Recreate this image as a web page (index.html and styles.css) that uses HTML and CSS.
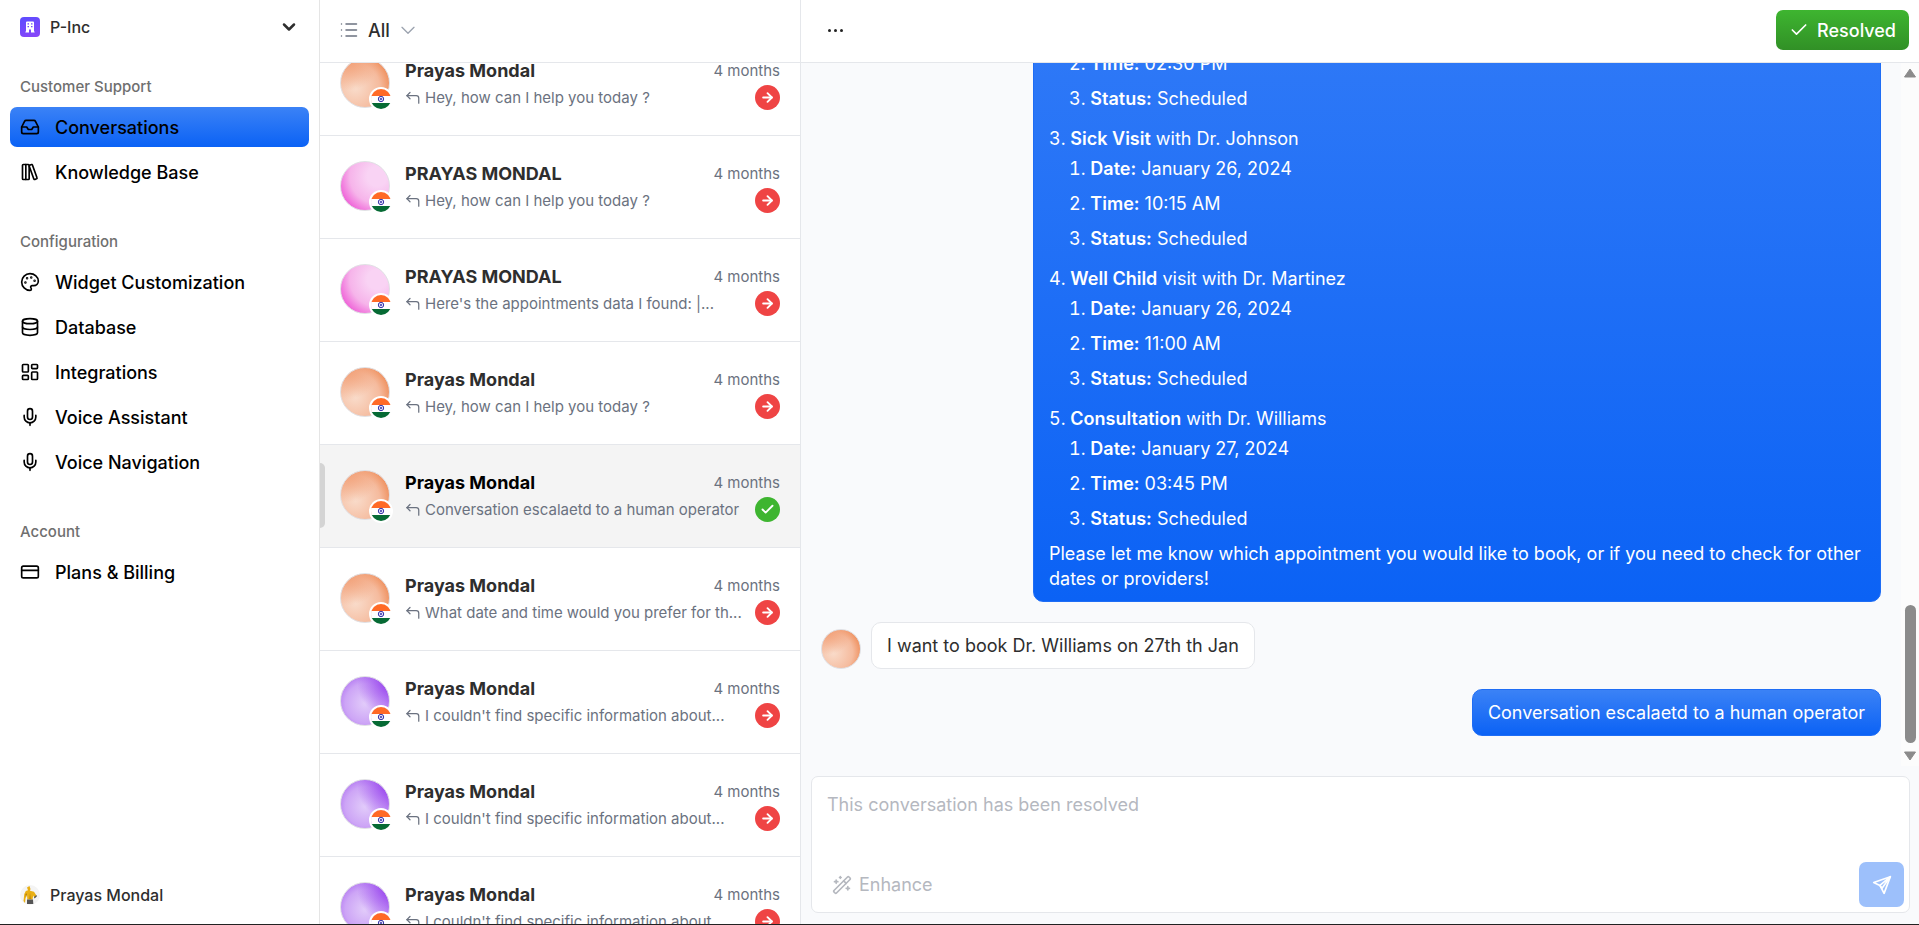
FILE: index.html
```
<!DOCTYPE html>
<html lang="en">
<head>
    <meta charset="UTF-8">
    <meta name="viewport" content="width=device-width, initial-scale=1.0">
    <title>Conversations | P-Inc</title>
    <link rel="stylesheet" href="styles.css">
</head>
<body>
    <!-- Icon sprite -->
    <svg class="sprite" aria-hidden="true">
        <symbol id="i-inbox" viewBox="0 0 24 24"><path d="M22 12h-6l-2 3h-4l-2-3H2"/><path d="M5.45 5.11 2 12v6a2 2 0 0 0 2 2h16a2 2 0 0 0 2-2v-6l-3.45-6.89A2 2 0 0 0 16.76 4H7.24a2 2 0 0 0-1.79 1.11z"/></symbol>
        <symbol id="i-library" viewBox="0 0 24 24"><rect width="8" height="18" x="3" y="3" rx="1"/><path d="M7 3v18"/><path d="M20.4 18.9c.2.5-.1 1.1-.6 1.3l-1.9.7c-.5.2-1.1-.1-1.3-.6L11.1 5.1c-.2-.5.1-1.1.6-1.3l1.9-.7c.5-.2 1.1.1 1.3.6Z"/></symbol>
        <symbol id="i-palette" viewBox="0 0 24 24"><circle cx="13.5" cy="6.5" r=".5" fill="currentColor"/><circle cx="17.5" cy="10.5" r=".5" fill="currentColor"/><circle cx="8.5" cy="7.5" r=".5" fill="currentColor"/><circle cx="6.5" cy="12.5" r=".5" fill="currentColor"/><path d="M12 2C6.5 2 2 6.5 2 12s4.5 10 10 10c.926 0 1.648-.746 1.648-1.688 0-.437-.18-.835-.437-1.125-.29-.289-.438-.652-.438-1.125a1.64 1.64 0 0 1 1.668-1.668h1.996c3.051 0 5.555-2.503 5.555-5.554C21.965 6.012 17.461 2 12 2z"/></symbol>
        <symbol id="i-database" viewBox="0 0 24 24"><ellipse cx="12" cy="5" rx="9" ry="3"/><path d="M3 5v14a9 3 0 0 0 18 0V5"/><path d="M3 12a9 3 0 0 0 18 0"/></symbol>
        <symbol id="i-dashboard" viewBox="0 0 24 24"><rect width="7" height="9" x="3" y="3" rx="1"/><rect width="7" height="5" x="14" y="3" rx="1"/><rect width="7" height="9" x="14" y="12" rx="1"/><rect width="7" height="5" x="3" y="16" rx="1"/></symbol>
        <symbol id="i-mic" viewBox="0 0 24 24"><path d="M12 2a3 3 0 0 0-3 3v7a3 3 0 0 0 6 0V5a3 3 0 0 0-3-3Z"/><path d="M19 10v2a7 7 0 0 1-14 0v-2"/><path d="M12 19v3"/></symbol>
        <symbol id="i-card" viewBox="0 0 24 24"><rect width="20" height="14" x="2" y="5" rx="2"/><path d="M2 10h20"/></symbol>
        <symbol id="i-chevron" viewBox="0 0 24 24"><path d="m6 9 6 6 6-6"/></symbol>
        <symbol id="i-chevron-wide" viewBox="0 0 24 24"><path d="m3 8 9 9 9-9"/></symbol>
        <symbol id="i-list" viewBox="0 0 24 24"><path d="M2 4h.01M2 12h.01M2 20h.01M8 4h14M8 12h14M8 20h14"/></symbol>
        <symbol id="i-check" viewBox="0 0 24 24"><path d="M20 6 9 17l-5-5"/></symbol>
        <symbol id="i-arrow" viewBox="0 0 24 24"><path d="M5 12h14"/><path d="m12 5 7 7-7 7"/></symbol>
        <symbol id="i-reply" viewBox="0 0 24 24"><path d="M22 21v-8a4 4 0 0 0-4-4H3"/><path d="M8 14 3 9l5-5"/></symbol>
        <symbol id="i-wand" viewBox="0 0 24 24"><path d="m21.64 3.64-1.28-1.28a1.21 1.21 0 0 0-1.72 0L2.36 18.64a1.21 1.21 0 0 0 0 1.72l1.28 1.28a1.2 1.2 0 0 0 1.72 0L21.64 5.36a1.2 1.2 0 0 0 0-1.72"/><path d="m14 7 3 3M5 6v4M19 14v4M10 2v2M7 8H3M21 16h-4M11 3H9"/></symbol>
        <symbol id="i-send" viewBox="0 0 24 24"><path d="M22 2 2 9l7.500 3.500L14.500 22z"/><path d="M22 2 9.500 12.500l2.500 3.500z"/></symbol>
        <symbol id="i-flag" viewBox="0 0 20 20"><path fill="#fff" stroke="none" d="M0 0h20v20H0z"/><path fill="#ff6a26" stroke="none" d="M0 0h20v7H0z"/><path fill="#066a34" stroke="none" d="M0 14h20v6H0z"/><circle cx="10" cy="10" r="2.7" fill="#dcdcf5" stroke="#3a36a8" stroke-width="1"/><circle cx="10" cy="10" r="1" fill="#3a36a8" stroke="none"/></symbol>
    </svg>

    <div class="app">
        <aside class="sidebar">
            <button class="org">
                <span class="org-logo">
                    <svg viewBox="0 0 20 20"><path fill="#fff" fill-rule="evenodd" d="M6 5.500a1 1 0 0 1 1-1h6a1 1 0 0 1 1 1v9h.6v1H11v-2.300a1 1 0 0 0-2 0v2.300H5.400v-1H6zM7.500 6.200v1.300H9V6.200zm3.500 0v1.300h1.500V6.200zM7.500 9v1.300H9V9zM11 9v1.300h1.500V9z"/></svg>
                </span>
                <span>P-Inc</span>
                <svg class="icon chevron"><use href="#i-chevron"/></svg>
            </button>

            <nav>
                <section>
                    <h2>Customer Support</h2>
                    <a class="active" href="#conversations"><svg class="icon"><use href="#i-inbox"/></svg>Conversations</a>
                    <a href="#knowledge"><svg class="icon"><use href="#i-library"/></svg>Knowledge Base</a>
                </section>
                <section>
                    <h2>Configuration</h2>
                    <a href="#widget"><svg class="icon"><use href="#i-palette"/></svg>Widget Customization</a>
                    <a href="#database"><svg class="icon"><use href="#i-database"/></svg>Database</a>
                    <a href="#integrations"><svg class="icon"><use href="#i-dashboard"/></svg>Integrations</a>
                    <a href="#assistant"><svg class="icon"><use href="#i-mic"/></svg>Voice Assistant</a>
                    <a href="#navigation"><svg class="icon"><use href="#i-mic"/></svg>Voice Navigation</a>
                </section>
                <section>
                    <h2>Account</h2>
                    <a href="#billing"><svg class="icon"><use href="#i-card"/></svg>Plans &amp; Billing</a>
                </section>
            </nav>

            <button class="user">
                <svg class="user-photo" viewBox="0 0 20 20"><circle cx="10" cy="10" r="10" fill="#f4f4f4"/><path fill="#e9af12" d="M7 2.500 9.500 1l1 3-.5 1.700 4 1 2.500 4-2 2.300-1.300-2.500-.7 4H7.300L7 9l-1.500 4.500L5 18l-1.500-2L4.300 9l1.500-3L8 5.300z"/><path fill="#a87408" d="m10 8 .6 6H9.500zM5.500 9l1.500-.5-1 4z"/><path fill="#555" d="M7 14.500h6l.3 4.500H7zM14 12l2.500-2 .3 1.500-2.300 2z"/></svg>
                <span>Prayas Mondal</span>
            </button>
        </aside>

        <section class="inbox">
            <header class="bar">
                <button class="filter">
                    <svg class="icon"><use href="#i-list"/></svg>
                    <span>All</span>
                    <svg class="icon filter-chevron"><use href="#i-chevron-wide"/></svg>
                </button>
            </header>
            <div class="threads" id="threads"></div>
        </section>

        <main class="chat">
            <header class="bar">
                <button class="more" aria-label="More"><i></i><i></i><i></i></button>
                <button class="resolved"><svg class="icon"><use href="#i-check"/></svg>Resolved</button>
            </header>

            <div class="stream">
                <div class="messages">
                    <div class="bubble agent long">
                        <ol start="2">
                            <li class="continued">
                                <ol start="2">
                                    <li><b>Time:</b> 02:30 PM</li>
                                    <li><b>Status:</b> Scheduled</li>
                                </ol>
                            </li>
                            <li><b>Sick Visit</b> with Dr. Johnson
                                <ol>
                                    <li><b>Date:</b> January 26, 2024</li>
                                    <li><b>Time:</b> 10:15 AM</li>
                                    <li><b>Status:</b> Scheduled</li>
                                </ol>
                            </li>
                            <li><b>Well Child</b> visit with Dr. Martinez
                                <ol>
                                    <li><b>Date:</b> January 26, 2024</li>
                                    <li><b>Time:</b> 11:00 AM</li>
                                    <li><b>Status:</b> Scheduled</li>
                                </ol>
                            </li>
                            <li><b>Consultation</b> with Dr. Williams
                                <ol>
                                    <li><b>Date:</b> January 27, 2024</li>
                                    <li><b>Time:</b> 03:45 PM</li>
                                    <li><b>Status:</b> Scheduled</li>
                                </ol>
                            </li>
                        </ol>
                        <p>Please let me know which appointment you would like to book, or if you need to check for other dates or providers!</p>
                    </div>
                    <div class="row">
                        <span class="avatar orange small"></span>
                        <div class="bubble">I want to book Dr. Williams on 27th th Jan</div>
                    </div>
                    <div class="bubble agent">Conversation escalaetd to a human operator</div>
                </div>
                <div class="scrollbar" aria-hidden="true">
                    <svg viewBox="0 0 14 10"><path d="M7 1 12.500 9h-11z"/></svg>
                    <div class="thumb"></div>
                    <svg viewBox="0 0 14 10"><path d="M7 9 12.500 1h-11z"/></svg>
                </div>
            </div>

            <form class="composer">
                <textarea aria-label="Message" placeholder="This conversation has been resolved" disabled></textarea>
                <div class="tools">
                    <button type="button" class="enhance" disabled><svg class="icon"><use href="#i-wand"/></svg>Enhance</button>
                    <button type="submit" class="send" aria-label="Send" disabled><svg class="icon"><use href="#i-send"/></svg></button>
                </div>
            </form>
        </main>
    </div>

    <script>
        const threads = [
            { name: "Prayas Mondal", text: "Hey, how can I help you today ?", avatar: "orange" },
            { name: "PRAYAS MONDAL", text: "Hey, how can I help you today ?", avatar: "pink" },
            { name: "PRAYAS MONDAL", text: "Here's the appointments data I found: |...", avatar: "pink" },
            { name: "Prayas Mondal", text: "Hey, how can I help you today ?", avatar: "orange" },
            { name: "Prayas Mondal", text: "Conversation escalaetd to a human operator", avatar: "orange", active: true },
            { name: "Prayas Mondal", text: "What date and time would you prefer for th...", avatar: "orange" },
            { name: "Prayas Mondal", text: "I couldn't find specific information about...", avatar: "purple" },
            { name: "Prayas Mondal", text: "I couldn't find specific information about...", avatar: "purple" },
            { name: "Prayas Mondal", text: "I couldn't find specific information about...", avatar: "purple" }
        ];

        const list = document.getElementById('threads');

        list.innerHTML = threads.map(t => `
            <a class="thread ${t.active ? 'selected' : ''}" href="#thread">
                <span class="avatar ${t.avatar}"><svg class="flag"><use href="#i-flag"/></svg></span>
                <span class="thread-body">
                    <span class="thread-line"><strong>${t.name}</strong><time>4 months</time></span>
                    <span class="thread-line">
                        <svg class="icon reply"><use href="#i-reply"/></svg>
                        <span class="preview">${t.text}</span>
                        <span class="status ${t.active ? 'done' : ''}"><svg class="icon"><use href="#${t.active ? 'i-check' : 'i-arrow'}"/></svg></span>
                    </span>
                </span>
            </a>`).join('');

        list.scrollTop = 30;
    </script>
</body>
</html>
```
FILE: styles.css
```
* {
    box-sizing: border-box;
}

body {
    margin: 0;
    font-family: Inter, "Liberation Sans", sans-serif;
    font-size: 18px;
    line-height: 25px;
    color: #2e2e2e;
    background-color: #fff;
}

button {
    font: inherit;
    color: inherit;
    border: none;
    background: none;
    padding: 0;
    cursor: pointer;
}

a {
    color: inherit;
    text-decoration: none;
}

.sprite {
    display: none;
}

.icon {
    width: 20px;
    height: 20px;
    flex-shrink: 0;
    fill: none;
    stroke: currentColor;
    stroke-width: 2;
    stroke-linecap: round;
    stroke-linejoin: round;
}

.app {
    display: flex;
    height: 100vh;
    border-bottom: 1px solid #222;
}

/* Sidebar */
.sidebar {
    display: flex;
    flex-direction: column;
    width: 320px;
    flex-shrink: 0;
    padding: 7px 10px 9px;
    border-right: 1px solid #e5e5e5;
}

.org,
.user {
    display: flex;
    align-items: center;
    gap: 10px;
    height: 40px;
    padding: 0 10px;
    font-size: 16px;
    font-weight: 500;
}

.org-logo {
    width: 20px;
    height: 20px;
    border-radius: 4px;
    background: linear-gradient(160deg, #5b4dff, #8b45f8);
}

.org-logo svg {
    display: block;
}

.chevron {
    margin-left: auto;
    stroke-width: 3;
    width: 20px;
    height: 20px;
}

.sidebar nav {
    flex: 1;
    display: flex;
    flex-direction: column;
    gap: 30px;
    padding-top: 20px;
}

.sidebar section {
    display: flex;
    flex-direction: column;
    gap: 5px;
}

.sidebar h2 {
    margin: 0 0 -5px;
    padding: 0 10px;
    font-size: 15px;
    font-weight: 500;
    line-height: 40px;
    color: #6f6f6f;
}

.sidebar nav a {
    display: flex;
    align-items: center;
    gap: 15px;
    height: 40px;
    padding: 0 10px;
    border-radius: 7px;
    font-weight: 500;
    color: #000;
}

.sidebar nav a.active {
    background: linear-gradient(#3b82f6, #0b62f5);
}

.user-photo {
    width: 20px;
    height: 20px;
}

/* Conversation list */
.bar {
    display: flex;
    align-items: center;
    flex-shrink: 0;
    height: 63px;
    padding: 0 10px 2px 20px;
    border-bottom: 1px solid #e5e7eb;
    background-color: #fff;
}

.inbox {
    display: flex;
    flex-direction: column;
    width: 481px;
    flex-shrink: 0;
    border-right: 1px solid #e5e7eb;
}

.filter {
    display: flex;
    align-items: center;
    gap: 10px;
    font-weight: 500;
}

.filter .icon {
    width: 18px;
    stroke: #6b7280;
}

.filter .filter-chevron {
    width: 16px;
    stroke: #9ca3af;
}

.threads {
    flex: 1;
    overflow-y: auto;
    scrollbar-width: none;
}

.thread {
    position: relative;
    display: flex;
    gap: 15px;
    padding: 25px 20px;
    border-bottom: 1px solid #e5e7eb;
}

.thread.selected {
    background-color: #f4f4f4;
    color: #000;
}

.thread.selected::before {
    content: "";
    position: absolute;
    left: 0;
    top: 18px;
    width: 5px;
    height: 65px;
    border-radius: 0 5px 5px 0;
    background-color: #d4d4d4;
}

.avatar {
    position: relative;
    width: 50px;
    height: 50px;
    flex-shrink: 0;
    border: 1px solid #e0e0e4;
    border-radius: 50%;
}

.avatar.small {
    width: 40px;
    height: 40px;
}

.orange {
    background:
        radial-gradient(circle at 15% 0, #f2a077 0, transparent 50%),
        radial-gradient(circle at 30% 60%, #f9dccb 0, #f5bb9e 55%, #ee8852 85%);
}

.pink {
    background: radial-gradient(circle at 75% 30%, #f9d3f4 20%, #f6b4ea 55%, #ee55d5 85%);
}

.purple {
    background:
        radial-gradient(circle at 100% 15%, #9a48ee 0, transparent 50%),
        radial-gradient(circle at 50% 55%, #e2ccfa 0, #cda5f6 55%, #b47af2 80%);
}

.flag {
    position: absolute;
    left: 28px;
    top: 28px;
    width: 24px;
    height: 24px;
    border: 2px solid #fff;
    border-radius: 50%;
}

.thread-body {
    flex: 1;
    min-width: 0;
    display: flex;
    flex-direction: column;
    gap: 2px;
}

.thread-line {
    display: flex;
    align-items: center;
    height: 25px;
}

.thread-line strong {
    flex: 1;
    font-weight: 700;
}

.thread-line time {
    font-size: 15px;
    color: #6b7280;
}

.reply {
    width: 15px;
    height: 15px;
    margin-right: 5px;
    color: #6b7280;
}

.preview {
    flex: 1;
    min-width: 0;
    margin-right: 10px;
    overflow: hidden;
    text-overflow: ellipsis;
    white-space: nowrap;
    font-size: 15px;
    color: #6b7280;
}

.status {
    display: grid;
    place-items: center;
    width: 25px;
    height: 25px;
    border-radius: 50%;
    color: #fff;
    background-color: #ef4444;
}

.status.done {
    background-color: #3eb530;
}

.status .icon {
    width: 15px;
    height: 15px;
    stroke-width: 3;
}

/* Chat */
.chat {
    flex: 1;
    min-width: 0;
    display: flex;
    flex-direction: column;
    background-color: #f9fafc;
}

.chat .bar {
    justify-content: space-between;
}

.more {
    display: flex;
    align-items: center;
    gap: 3px;
    height: 40px;
    padding: 0 7px;
}

.more i {
    width: 3px;
    height: 3px;
    border-radius: 50%;
    background-color: #222;
}

.resolved {
    display: flex;
    align-items: center;
    gap: 8px;
    height: 40px;
    padding: 0 13px;
    border-radius: 7px;
    font-weight: 500;
    color: #fff;
    background: linear-gradient(#3eb530, #319026);
}

.stream {
    flex: 1;
    min-height: 0;
    display: flex;
}

.messages {
    flex: 1;
    display: flex;
    flex-direction: column;
    justify-content: flex-end;
    align-items: flex-start;
    gap: 20px;
    padding: 0 20px 30px;
    overflow: hidden;
}

.row {
    display: flex;
    align-items: flex-end;
    gap: 10px;
}

.bubble {
    padding: 10px 15px;
    border: 1px solid #e5e7eb;
    border-radius: 10px;
    background-color: #fff;
    flex-shrink: 0;
}

.bubble.agent {
    align-self: flex-end;
    border-color: #1f6df5;
    color: #fff;
    background: linear-gradient(#3b82f6, #0b62f5);
}

.bubble.long {
    max-width: 80%;
    background: linear-gradient(#2f79f7, #0b62f5);
}

.bubble ol {
    margin: 0;
    padding: 0;
    list-style-position: inside;
}

.bubble ol ol {
    padding-left: 20px;
}

.bubble li {
    padding: 5px 0;
}

.bubble .continued {
    list-style-type: none;
}

.bubble b {
    font-weight: 600;
}

.bubble p {
    margin: 0;
}

.scrollbar {
    display: flex;
    flex-direction: column;
    align-items: center;
    gap: 8px;
    width: 18px;
    padding: 5px 0;
    background-color: #fcfcfc;
}

.scrollbar svg {
    width: 14px;
    height: 10px;
    fill: #8b8b8b;
    stroke: #8b8b8b;
    stroke-linejoin: round;
}

.thumb {
    width: 11px;
    height: 138px;
    margin-top: auto;
    border-radius: 6px;
    background-color: #8b8b8b;
}

.composer {
    display: flex;
    flex-direction: column;
    margin: 10px 9px 11px 10px;
    padding: 5px;
    border: 1px solid #e5e7eb;
    border-radius: 7px;
    background-color: #fff;
}

.composer textarea {
    height: 80px;
    padding: 10px;
    border: none;
    resize: none;
    font: inherit;
    background: none;
}

.composer textarea::placeholder {
    color: #b5b8bf;
}

.tools {
    display: flex;
    align-items: center;
    justify-content: space-between;
}

.enhance {
    display: flex;
    align-items: center;
    gap: 7px;
    padding: 0 15px;
    color: #b5b8bf;
}

.send {
    display: grid;
    place-items: center;
    width: 45px;
    height: 45px;
    border-radius: 7px;
    color: #fff;
    background-color: #9dc0fb;
}
```
